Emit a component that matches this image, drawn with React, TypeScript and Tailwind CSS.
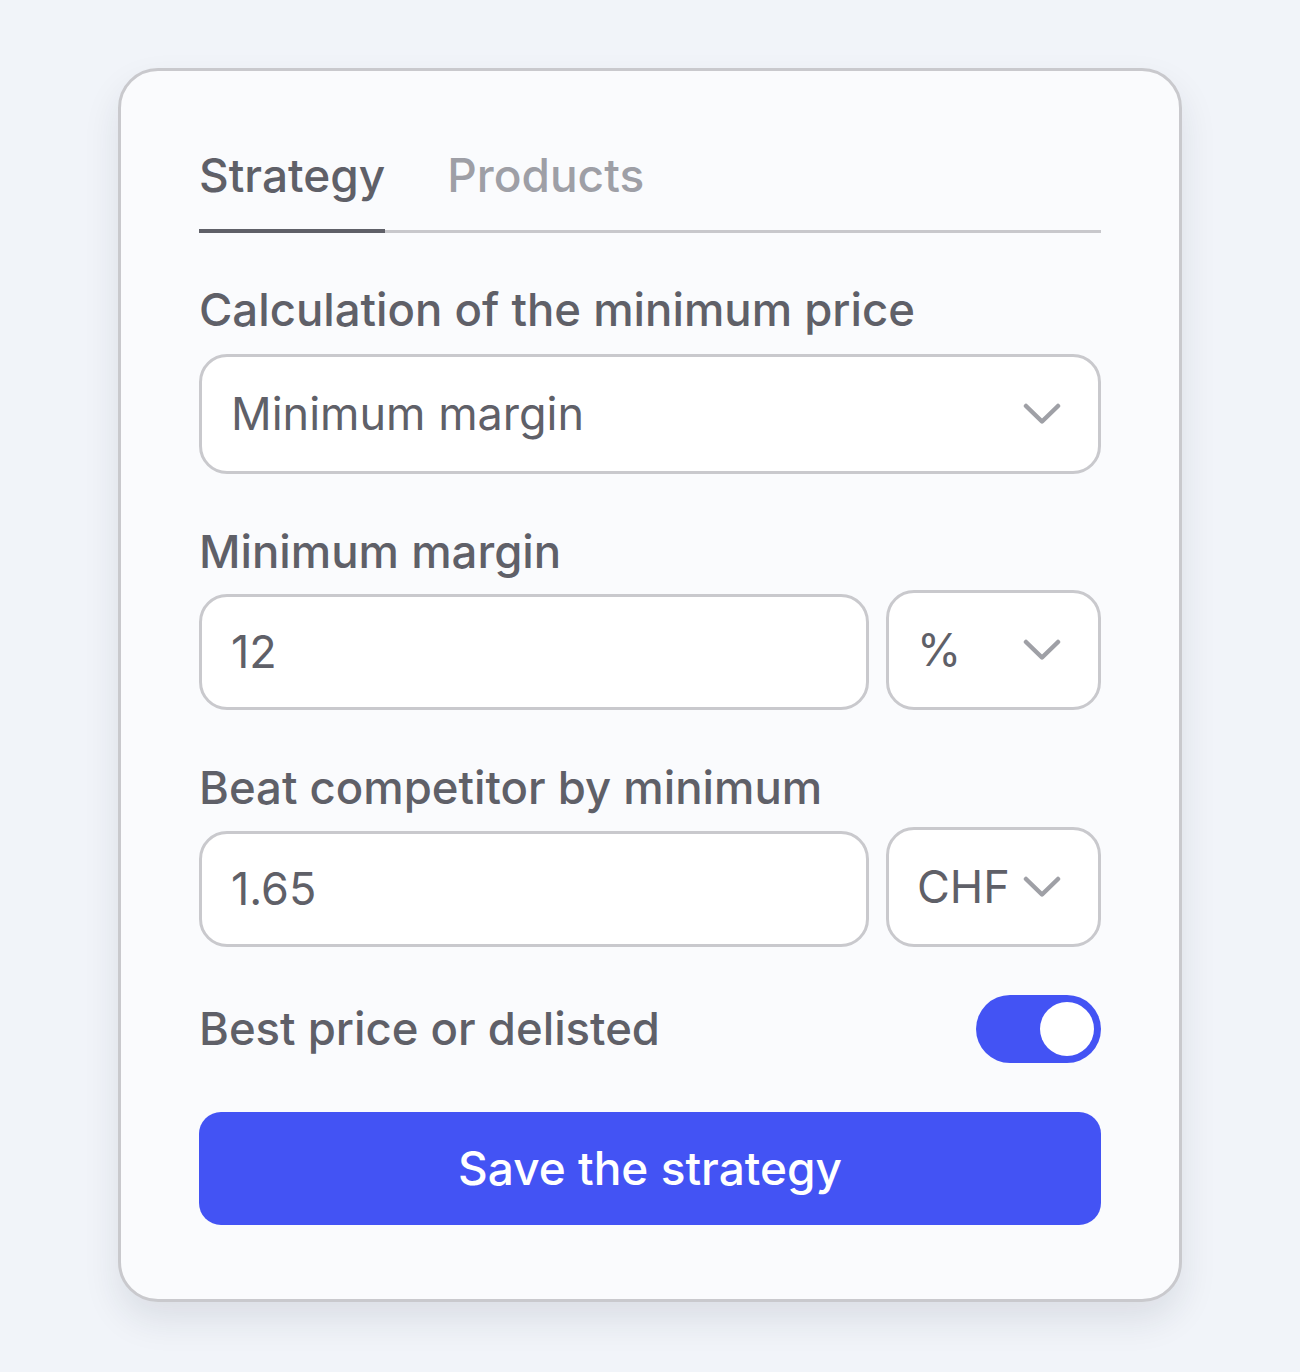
import { useState } from "react"

function Chevron() {
  return (
    <svg width="38" height="22" viewBox="0 0 38 22" fill="none" className="shrink-0">
      <path d="M3 3 L19 18.5 L35 3" stroke="#9fa0a6" strokeWidth="4.5" strokeLinecap="round" strokeLinejoin="round" />
    </svg>
  )
}

function Label({ children }: { children: React.ReactNode }) {
  return <div className="text-[45.5px] leading-[1.2] font-medium text-[#5f6068]">{children}</div>
}

function UnitSelect({ value }: { value: string }) {
  return (
    <div className="w-[215px] h-[120px] shrink-0 flex items-center justify-between pl-[28px] pr-[37px] bg-white border-[3px] border-[#c9c9cd] rounded-[28px] text-[45px] leading-[1.2] text-[#5f6068]">
      <span>{value}</span>
      <Chevron />
    </div>
  )
}

export default function App() {
  const [tab, setTab] = useState("strategy")
  const [on, setOn] = useState(true)

  return (
    <div className="min-h-screen bg-[#f1f4f9] flex justify-center pt-[68px] pb-[70px]" style={{ fontFamily: "Inter, 'Noto Sans', sans-serif" }}>
      <div className="w-[1064px] h-[1234px] bg-[#fafbfd] border-[3px] border-[#c9c9cd] rounded-[40px] shadow-[0_18px_36px_rgba(30,40,60,0.10)] px-[78px] pt-[77px]">
        <div className="flex gap-[62px] border-b-[3px] border-[#c8c8cc]">
          <button
            onClick={() => setTab("strategy")}
            className={
              "pb-[26px] -mb-[3px] text-[46px] leading-[1.2] font-medium border-b-4 " +
              (tab === "strategy" ? "text-[#5f6068] border-[#5f6068]" : "text-[#9e9fa6] border-transparent")
            }
          >
            Strategy
          </button>
          <button
            onClick={() => setTab("products")}
            className={
              "pb-[26px] -mb-[3px] text-[46px] leading-[1.2] font-medium border-b-4 " +
              (tab === "products" ? "text-[#5f6068] border-[#5f6068]" : "text-[#9e9fa6] border-transparent")
            }
          >
            Products
          </button>
        </div>

        <div className="mt-[50px]">
          <Label>Calculation of the minimum price</Label>
          <div className="mt-[16px] h-[120px] flex items-center justify-between pl-[29px] pr-[37px] bg-white border-[3px] border-[#c9c9cd] rounded-[28px] text-[45px] leading-[1.2] text-[#5f6068]">
            <span>Minimum margin</span>
            <Chevron />
          </div>
        </div>

        <div className="mt-[51px]">
          <Label>Minimum margin</Label>
          <div className="mt-[11px] flex items-end gap-[17px]">
            <div className="flex-1 h-[116px] flex items-center pl-[29px] bg-white border-[3px] border-[#c9c9cd] rounded-[28px] text-[45px] leading-[1.2] text-[#5f6068]">
              12
            </div>
            <UnitSelect value="%" />
          </div>
        </div>

        <div className="mt-[51px]">
          <Label>Beat competitor by minimum</Label>
          <div className="mt-[11px] flex items-end gap-[17px]">
            <div className="flex-1 h-[116px] flex items-center pl-[29px] bg-white border-[3px] border-[#c9c9cd] rounded-[28px] text-[45px] leading-[1.2] text-[#5f6068]">
              1.65
            </div>
            <UnitSelect value="CHF" />
          </div>
        </div>

        <div className="mt-[48px] flex items-center justify-between">
          <Label>Best price or delisted</Label>
          <button
            onClick={() => setOn(!on)}
            className={"w-[125px] h-[68px] rounded-full p-[7px] flex " + (on ? "bg-[#4353f4] justify-end" : "bg-[#c9c9cd] justify-start")}
          >
            <span className="w-[54px] h-[54px] rounded-full bg-white block" />
          </button>
        </div>

        <button className="mt-[49px] w-full h-[113px] rounded-[22px] bg-[#4353f4] text-white text-[46px] leading-[1.2] font-medium">
          Save the strategy
        </button>
      </div>
    </div>
  )
}
